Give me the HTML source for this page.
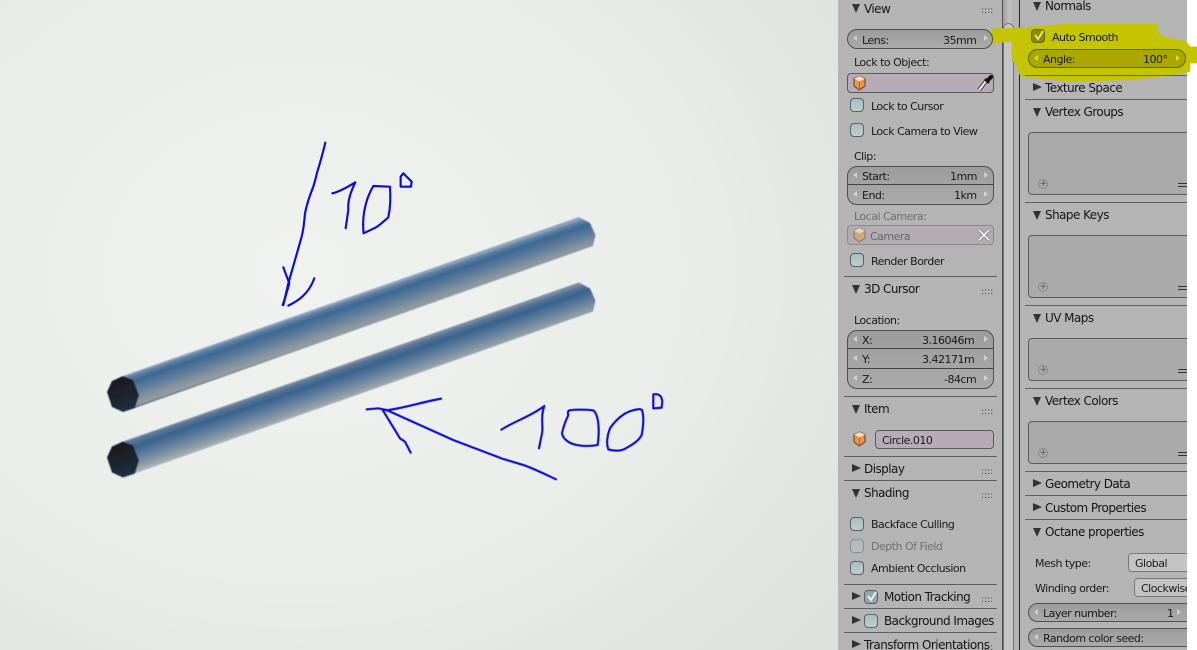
<!DOCTYPE html>
<html><head><meta charset="utf-8">
<style>
html,body{margin:0;padding:0;background:#fff}
#r{position:relative;width:1197px;height:650px;overflow:hidden;font-family:"DejaVu Sans","Liberation Sans",sans-serif;color:#1a1a1a}
#r div,#r span,#r svg{position:absolute}
.t{font-size:11px;line-height:14px;white-space:nowrap;letter-spacing:-.5px;margin-top:1px}
.h{font-size:12px;line-height:16px;white-space:nowrap;letter-spacing:-.55px;color:#151515}
.l{height:1px;background:#5e5e5e}
.f{box-sizing:border-box;border:1px solid #4f4f4f;background:linear-gradient(#9c9c9c,#aaa)}
.i{box-sizing:border-box;border:1px solid #5a5a5a;background:#b7abb7;border-radius:4px}
.b{box-sizing:border-box;border:1px solid #5c5c5c;background:#aaa;border-radius:4px}
.c{box-sizing:border-box;width:14px;height:14px;border:1px solid #5f5f5f;border-radius:4px;background:linear-gradient(#a6bfc2,#bccecd)}
.d{width:0;height:0;border-left:9px solid #333;border-top:4.5px solid transparent;border-bottom:4.5px solid transparent}
.o{width:0;height:0;border-top:9px solid #333;border-left:4.5px solid transparent;border-right:4.5px solid transparent}
.g{font-size:9px;letter-spacing:0;color:#444;line-height:10px;white-space:nowrap}
.al{width:0;height:0;border-right:4px solid #cfcfcf;border-top:3.5px solid transparent;border-bottom:3.5px solid transparent}
.ar{width:0;height:0;border-left:4px solid #cfcfcf;border-top:3.5px solid transparent;border-bottom:3.5px solid transparent}
</style></head><body>
<div id="r">
<!-- viewport -->
<div style="left:0;top:0;width:838px;height:650px;background:radial-gradient(ellipse 680px 560px at 300px 270px,#f0f2f0 0%,#eaedea 55%,#dde2de 100%)"></div>
<svg style="left:0;top:0" width="838" height="650" viewBox="0 0 838 650">
<defs>
<linearGradient id="a" gradientUnits="userSpaceOnUse" x1="118" y1="378" x2="129" y2="410">
<stop offset="0" stop-color="#8ea4ba"/><stop offset=".07" stop-color="#5f83a8"/><stop offset=".22" stop-color="#3f6792"/><stop offset=".5" stop-color="#5f7d9c"/><stop offset=".78" stop-color="#87959f"/><stop offset=".92" stop-color="#949da3"/><stop offset="1" stop-color="#666d72"/>
</linearGradient>
<linearGradient id="b" gradientUnits="userSpaceOnUse" x1="118" y1="378" x2="129" y2="410">
<stop offset="0" stop-color="#7c8c9c"/><stop offset=".07" stop-color="#54759a"/><stop offset=".24" stop-color="#3b628c"/><stop offset=".55" stop-color="#62809e"/><stop offset=".85" stop-color="#949fa9"/><stop offset="1" stop-color="#b4babd"/>
</linearGradient>
<linearGradient id="k" x1="0" y1="0" x2=".3" y2="1"><stop offset="0" stop-color="#16181b"/><stop offset=".55" stop-color="#1d2229"/><stop offset="1" stop-color="#1f2e42"/></linearGradient>
<filter id="s"><feGaussianBlur stdDeviation=".55"/></filter>
<filter id="u"><feGaussianBlur stdDeviation=".3"/></filter>
</defs>
<g filter="url(#s)">
<path d="M123 376 L579 217 L590 223 L595.500 235 L593 246 L135 408 Z" fill="url(#a)"/>
<path d="M107 392 L112 381 L123 376 L133 380 L139 395 L135 408 L123 412 L112 407 Z" fill="url(#k)"/>
<g transform="translate(0 65.500)">
<path d="M123 376 L579 217 L590 223 L595.500 235 L593 246 L135 408 Z" fill="url(#b)"/>
<path d="M107 392 L112 381 L123 376 L133 380 L139 395 L135 408 L123 412 L112 407 Z" fill="url(#k)"/>
</g>
</g>
<g filter="url(#u)">
<g fill="none" stroke="#0a10d8" stroke-width="6.500" stroke-linecap="round" stroke-linejoin="round" transform="translate(270 130) scale(.3333)">
<path d="M166 38 C158 70 150 100 142 125 C136 150 132 165 128 175 C118 200 110 225 105 250 C103 275 100 300 95 320 L75 390 L55 460 L40 525"/>
<path d="M40 412 L58 460 L45 505 L38 525"/>
<path d="M55 527 C80 515 115 495 133 445"/>
<path d="M187 190 C210 185 235 170 256 157 C245 180 232 210 235 240 L227 295"/>
<path d="M310 168 L360 170 C362 200 362 230 355 262 C340 275 325 290 312 295 L281 310 C276 270 282 215 310 168Z"/>
<path d="M400 130 L425 155 L423 170 L392 170 L392 140Z"/>
</g>
<g fill="none" stroke="#0a10d8" stroke-width="6.500" stroke-linecap="round" stroke-linejoin="round" transform="translate(360 385) scale(.3333)">
<path d="M588 283 C550 265 520 250 490 240 L430 222 L280 165 L80 75 L55 70 L20 73"/>
<path d="M243 41 C190 50 130 70 78 76"/>
<path d="M68 75 L120 160 L135 170 L152 203"/>
<path d="M424 134 C460 110 510 95 553 63 C540 95 552 130 545 150 L537 190"/>
<path d="M628 76 C650 73 680 74 700 76 C715 88 720 130 713 180 C690 184 665 183 650 180 C625 175 608 160 606 145 C610 125 618 105 625 90 C622 82 625 78 628 76Z"/>
<path d="M840 72 C800 75 770 100 750 130 C742 150 738 175 745 193 C760 198 780 198 792 193 C810 183 835 170 845 150 C850 125 852 95 846 75Z"/>
<path d="M880 28 C895 25 905 30 907 50 L905 68 L880 70Z"/>
</g>
</g>
</svg>

<!-- panels -->
<div style="left:838px;top:0;width:164px;height:650px;background:#b4b4b4"></div>
<div style="left:1002px;top:0;width:1px;height:650px;background:#4e4e4e"></div>
<div style="left:1003px;top:0;width:11px;height:650px;background:linear-gradient(90deg,#9f9f9f,#c0c0c0 60%,#b0b0b0)"></div>
<div style="left:1003px;top:23px;width:11px;height:627px;box-sizing:border-box;border:1px solid #777;border-bottom:0;border-radius:6px 6px 0 0;background:#c4c4c4"></div>
<div style="left:1014px;top:0;width:5px;height:650px;background:#b4b4b4"></div>
<div style="left:1019px;top:0;width:1px;height:650px;background:#222"></div>
<div style="left:1020px;top:0;width:167px;height:650px;background:#b4b4b4"></div>

<!-- yellow highlight -->
<svg style="left:830px;top:0" width="367" height="90" viewBox="0 0 1101 270">
<path d="M485 85 L540 85 L700 72 L980 72 L990 105 L1070 125 L1081 140 L1101 140 L1101 190 L1081 190 L1081 215 L1000 230 L900 240 L720 245 L620 235 L570 228 L555 185 L545 185 L545 125 L485 130Z" fill="#c4c400"/>
</svg>

<!-- LEFT PANEL -->
<div class="o" style="left:852px;top:4px"></div><div class="h" style="left:864px;top:1px">View</div><div class="g" style="left:981px;top:6px">::::</div>
<div class="f" style="left:847px;top:29px;width:146px;height:20px;border-radius:10px"></div>
<div class="al" style="left:853px;top:35px"></div><div class="t" style="left:862px;top:33px">Lens:</div><div class="t" style="left:943px;top:33px">35mm</div><div class="ar" style="left:984px;top:35px"></div>
<div class="t" style="left:854px;top:55px">Lock to Object:</div>
<div class="i" style="left:847px;top:73px;width:147px;height:20px"></div>
<svg style="left:852px;top:75px" width="15" height="16" viewBox="0 0 15 16"><path d="M7.500 1 L13 3.500 V11 L7.500 15 L2 11 V3.500Z" fill="#e8954a" stroke="#5a4030"/><path d="M2 3.500 L7.500 6.500 L13 3.500 L7.500 1Z" fill="#f5dcc0"/><path d="M7.500 6.500V15" stroke="#b06a28"/></svg>
<svg style="left:977px;top:75px" width="16" height="17" viewBox="0 0 16 17"><path d="M2 15 L9 6" stroke="#333" stroke-width="4"/><path d="M2 15 L9 6" stroke="#eee" stroke-width="2.200"/><path d="M8 4 L12 8" stroke="#111" stroke-width="2.500"/><path d="M11 5 L14 2" stroke="#111" stroke-width="4" stroke-linecap="round"/></svg>
<div class="c" style="left:850px;top:98px"></div><div class="t" style="left:871px;top:99px">Lock to Cursor</div>
<div class="c" style="left:850px;top:123px"></div><div class="t" style="left:871px;top:124px">Lock Camera to View</div>
<div class="t" style="left:854px;top:149px">Clip:</div>
<div class="f" style="left:847px;top:166px;width:147px;height:39px;border-radius:10px"></div>
<div class="l" style="left:848px;top:184px;width:145px;background:#444"></div>
<div class="al" style="left:853px;top:172px"></div><div class="t" style="left:862px;top:169px">Start:</div><div class="t" style="left:950px;top:169px">1mm</div><div class="ar" style="left:984px;top:172px"></div>
<div class="al" style="left:853px;top:191px"></div><div class="t" style="left:862px;top:188px">End:</div><div class="t" style="left:954px;top:188px">1km</div><div class="ar" style="left:984px;top:191px"></div>
<div class="t" style="left:854px;top:209px;color:#6f6f6f">Local Camera:</div>
<div class="i" style="left:847px;top:225px;width:147px;height:20px;background:#b3adb3;border-color:#8a8a8a"></div>
<svg style="left:852px;top:227px" width="15" height="16" viewBox="0 0 15 16"><path d="M7.500 1 L13 3.500 V11 L7.500 15 L2 11 V3.500Z" fill="#d4a67c" stroke="#85705f"/><path d="M2 3.500 L7.500 6.500 L13 3.500 L7.500 1Z" fill="#e4d4c2"/></svg>
<div class="t" style="left:870px;top:229px;color:#666">Camera</div>
<svg style="left:977px;top:228px" width="14" height="14" viewBox="0 0 14 14"><path d="M2 2 L12 12 M12 2 L2 12" stroke="#777" stroke-width="3.500"/><path d="M2 2 L12 12 M12 2 L2 12" stroke="#e8e8e8" stroke-width="2"/></svg>
<div class="c" style="left:850px;top:253px"></div><div class="t" style="left:871px;top:254px">Render Border</div>
<div class="l" style="left:844px;top:276px;width:153px"></div>
<div class="o" style="left:852px;top:285px"></div><div class="h" style="left:864px;top:281px">3D Cursor</div><div class="g" style="left:981px;top:287px">::::</div>
<div class="t" style="left:854px;top:313px">Location:</div>
<div class="f" style="left:847px;top:330px;width:147px;height:59px;border-radius:10px"></div>
<div class="l" style="left:848px;top:348px;width:145px;background:#444"></div><div class="l" style="left:848px;top:368px;width:145px;background:#444"></div>
<div class="al" style="left:853px;top:336px"></div><div class="t" style="left:862px;top:333px">X:</div><div class="t" style="left:922px;top:333px">3.16046m</div><div class="ar" style="left:984px;top:336px"></div>
<div class="al" style="left:853px;top:355px"></div><div class="t" style="left:862px;top:352px">Y:</div><div class="t" style="left:922px;top:352px">3.42171m</div><div class="ar" style="left:984px;top:355px"></div>
<div class="al" style="left:853px;top:375px"></div><div class="t" style="left:862px;top:372px">Z:</div><div class="t" style="left:944px;top:372px">-84cm</div><div class="ar" style="left:984px;top:375px"></div>
<div class="l" style="left:844px;top:396px;width:153px"></div>
<div class="o" style="left:852px;top:405px"></div><div class="h" style="left:864px;top:401px">Item</div><div class="g" style="left:981px;top:407px">::::</div>
<svg style="left:852px;top:431px" width="15" height="16" viewBox="0 0 15 16"><path d="M7.500 1 L13 3.500 V11 L7.500 15 L2 11 V3.500Z" fill="#e8954a" stroke="#5a4030"/><path d="M2 3.500 L7.500 6.500 L13 3.500 L7.500 1Z" fill="#f5dcc0"/><path d="M7.500 6.500V15" stroke="#b06a28"/></svg>
<div class="i" style="left:875px;top:430px;width:119px;height:19px"></div><div class="t" style="left:882px;top:433px">Circle.010</div>
<div class="l" style="left:844px;top:456px;width:153px"></div>
<div class="d" style="left:852px;top:464px"></div><div class="h" style="left:864px;top:461px">Display</div><div class="g" style="left:981px;top:467px">::::</div>
<div class="l" style="left:844px;top:480px;width:153px"></div>
<div class="o" style="left:852px;top:489px"></div><div class="h" style="left:864px;top:485px">Shading</div><div class="g" style="left:981px;top:491px">::::</div>
<div class="c" style="left:850px;top:517px"></div><div class="t" style="left:871px;top:517px">Backface Culling</div>
<div class="c" style="left:850px;top:539px;opacity:.45"></div><div class="t" style="left:871px;top:539px;color:#707070">Depth Of Field</div>
<div class="c" style="left:850px;top:561px"></div><div class="t" style="left:871px;top:561px">Ambient Occlusion</div>
<div class="l" style="left:844px;top:584px;width:153px"></div>
<div class="d" style="left:852px;top:592px"></div>
<div class="c" style="left:864px;top:590px;background:#8fa8ae"></div>
<svg style="left:865px;top:590px" width="13" height="13" viewBox="0 0 13 13"><path d="M3 6 L6 10 L11 2" fill="none" stroke="#eee" stroke-width="2"/></svg>
<div class="h" style="left:884px;top:589px">Motion Tracking</div><div class="g" style="left:981px;top:595px">::::</div>
<div class="l" style="left:844px;top:608px;width:153px"></div>
<div class="d" style="left:852px;top:616px"></div><div class="c" style="left:864px;top:614px"></div>
<div class="h" style="left:884px;top:613px">Background Images</div>
<div class="l" style="left:844px;top:632px;width:153px"></div>
<div class="d" style="left:852px;top:640px"></div><div class="h" style="left:864px;top:637px">Transform Orientations</div><div class="g" style="left:981px;top:643px">::::</div>

<!-- RIGHT PANEL -->
<div id="p" style="left:1020px;top:0;width:167px;height:650px;overflow:hidden">
<div class="o" style="left:13px;top:2px"></div><div class="h" style="left:25px;top:-2px">Normals</div>
<div class="c" style="left:11px;top:29px;background:#8b8a10;border-color:#666600"></div>
<svg style="left:12px;top:29px" width="13" height="13" viewBox="0 0 13 13"><path d="M3 6 L6 10 L11 2" fill="none" stroke="#e8e860" stroke-width="2"/></svg>
<div class="t" style="left:32px;top:30px">Auto Smooth</div>
<div class="f" style="left:8px;top:49px;width:158px;height:19px;border-radius:10px;background:#aaa800;border-color:#5e5e00"></div>
<div class="al" style="left:14px;top:55px;border-right-color:#d8d840"></div><div class="t" style="left:23px;top:52px">Angle:</div><div class="t" style="left:123px;top:52px">100°</div><div class="ar" style="left:156px;top:55px;border-left-color:#d8d840"></div>
<div class="l" style="left:5px;top:75px;width:162px"></div>
<div class="d" style="left:13px;top:83px"></div><div class="h" style="left:25px;top:80px">Texture Space</div>
<div class="l" style="left:5px;top:99px;width:162px"></div>
<div class="o" style="left:13px;top:108px"></div><div class="h" style="left:25px;top:104px">Vertex Groups</div>
<div class="b" style="left:8px;top:132px;width:170px;height:63px"></div>
<div class="g" style="left:18px;top:179px;width:8px;height:8px;border:1px solid #888;border-radius:50%"></div>
<div class="h" style="left:18px;top:176px;width:10px;text-align:center;font-size:9px;color:#555">+</div>
<div class="l" style="left:158px;top:183px;width:9px;background:#333"></div><div class="l" style="left:158px;top:186px;width:9px;background:#333"></div>
<div class="l" style="left:5px;top:202px;width:162px"></div>
<div class="o" style="left:13px;top:211px"></div><div class="h" style="left:25px;top:207px">Shape Keys</div>
<div class="b" style="left:8px;top:235px;width:170px;height:63px"></div>
<div class="g" style="left:18px;top:282px;width:8px;height:8px;border:1px solid #888;border-radius:50%"></div>
<div class="h" style="left:18px;top:279px;width:10px;text-align:center;font-size:9px;color:#555">+</div>
<div class="l" style="left:158px;top:286px;width:9px;background:#333"></div><div class="l" style="left:158px;top:289px;width:9px;background:#333"></div>
<div class="l" style="left:5px;top:305px;width:162px"></div>
<div class="o" style="left:13px;top:314px"></div><div class="h" style="left:25px;top:310px">UV Maps</div>
<div class="b" style="left:8px;top:338px;width:170px;height:43px"></div>
<div class="g" style="left:18px;top:365px;width:8px;height:8px;border:1px solid #888;border-radius:50%"></div>
<div class="h" style="left:18px;top:362px;width:10px;text-align:center;font-size:9px;color:#555">+</div>
<div class="l" style="left:158px;top:369px;width:9px;background:#333"></div><div class="l" style="left:158px;top:372px;width:9px;background:#333"></div>
<div class="l" style="left:5px;top:388px;width:162px"></div>
<div class="o" style="left:13px;top:397px"></div><div class="h" style="left:25px;top:393px">Vertex Colors</div>
<div class="b" style="left:8px;top:421px;width:170px;height:43px"></div>
<div class="g" style="left:18px;top:448px;width:8px;height:8px;border:1px solid #888;border-radius:50%"></div>
<div class="h" style="left:18px;top:445px;width:10px;text-align:center;font-size:9px;color:#555">+</div>
<div class="l" style="left:158px;top:452px;width:9px;background:#333"></div><div class="l" style="left:158px;top:455px;width:9px;background:#333"></div>
<div class="l" style="left:5px;top:471px;width:162px"></div>
<div class="d" style="left:13px;top:479px"></div><div class="h" style="left:25px;top:476px">Geometry Data</div>
<div class="l" style="left:5px;top:495px;width:162px"></div>
<div class="d" style="left:13px;top:503px"></div><div class="h" style="left:25px;top:500px">Custom Properties</div>
<div class="l" style="left:5px;top:519px;width:162px"></div>
<div class="o" style="left:13px;top:528px"></div><div class="h" style="left:25px;top:524px">Octane properties</div>
<div class="t" style="left:15px;top:556px">Mesh type:</div>
<div class="f" style="left:108px;top:553px;width:80px;height:19px;border-radius:4px;background:#c4c4c4;border-color:#777"></div><div class="t" style="left:115px;top:556px">Global</div>
<div class="t" style="left:15px;top:581px">Winding order:</div>
<div class="f" style="left:114px;top:578px;width:80px;height:19px;border-radius:4px;background:#c4c4c4;border-color:#777"></div><div class="t" style="left:121px;top:581px">Clockwise</div>
<div class="f" style="left:8px;top:603px;width:170px;height:19px;border-radius:10px"></div>
<div class="al" style="left:14px;top:609px"></div><div class="t" style="left:23px;top:606px">Layer number:</div><div class="t" style="left:147px;top:606px">1</div><div class="ar" style="left:157px;top:609px"></div>
<div class="f" style="left:8px;top:628px;width:170px;height:19px;border-radius:10px"></div>
<div class="al" style="left:14px;top:634px"></div><div class="t" style="left:23px;top:631px">Random color seed:</div>
</div>
</div>
</body></html>
